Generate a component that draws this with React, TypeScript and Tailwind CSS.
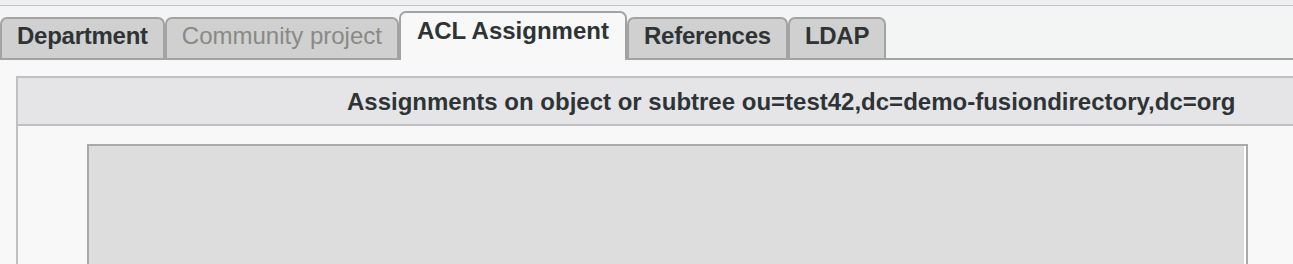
import React from "react";

type Tab = {
  label: string;
  active?: boolean;
  disabled?: boolean;
};

const TABS: Tab[] = [
  { label: "Department" },
  { label: "Community project", disabled: true },
  { label: "ACL Assignment", active: true },
  { label: "References" },
  { label: "LDAP" },
];

function TabButton({ tab }: { tab: Tab }) {
  if (tab.active) {
    return (
      <div className="relative z-10 -mb-[2px] h-[49px] shrink-0 rounded-t-[7px] border-2 border-b-0 border-[#a3a3a3] bg-[#f8f8f8] px-[16px] pt-[4px] text-[24px] font-bold leading-[27px] text-[#2e3436]">
        {tab.label}
      </div>
    );
  }
  return (
    <div
      className={`h-[41px] shrink-0 rounded-t-[7px] border-2 border-b-0 border-[#a3a3a3] bg-[#d0d0d0] px-[15px] pt-[3px] text-[24px] leading-[27px] ${
        tab.disabled ? "font-normal text-[#888a85]" : "font-bold tracking-[-0.25px] text-[#2e3436]"
      }`}
    >
      {tab.label}
    </div>
  );
}

export default function App() {
  return (
    <div
      className="h-[264px] w-[1293px] overflow-hidden bg-[#f8f8f8]"
      style={{ fontFamily: '"Liberation Sans", Arial, sans-serif' }}
    >
      <div className="h-[6px] border-b border-[#c4c4c4] bg-[#eeeff0]" />

      <div className="flex h-[54px] items-end border-b-2 border-[#a3a3a3] bg-[#f3f4f4]">
        {TABS.map((tab) => (
          <TabButton key={tab.label} tab={tab} />
        ))}
      </div>

      <div className="pl-[16px] pt-[16px]">
        <div className="w-[1550px] border-2 border-[#c0c0c2]">
          <div className="flex h-[48px] items-center border-b-2 border-[#c0c0c2] bg-[#e5e5e7] pl-[329px] text-[24px] font-bold leading-[27px] text-[#2e3436]">
            Assignments on object or subtree ou=test42,dc=demo-fusiondirectory,dc=org
          </div>
          <div className="pl-[69px] pt-[18px]">
            <div className="h-[200px] w-[1161px] border-2 border-[#aaaaaa] bg-[#dddddd]">
              <div className="h-full w-full border-r-2 border-white" />
            </div>
          </div>
        </div>
      </div>
    </div>
  );
}
